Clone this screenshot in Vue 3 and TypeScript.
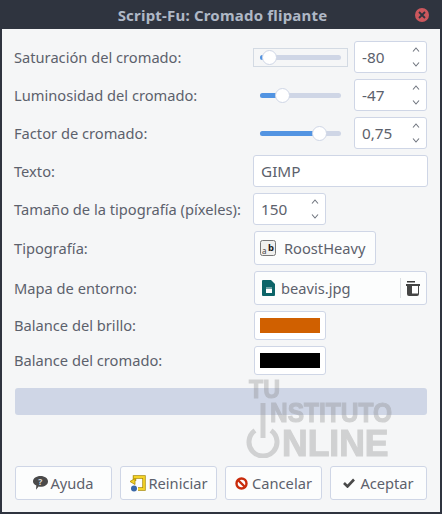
<script setup lang="ts">
interface SliderRow {
  label: string
  value: string
  percent: number
  focused?: boolean
}

const sliders: SliderRow[] = [
  { label: 'Saturación del cromado:', value: '-80', percent: 11, focused: true },
  { label: 'Luminosidad del cromado:', value: '-47', percent: 27 },
  { label: 'Factor de cromado:', value: '0,75', percent: 73 },
]
</script>

<template>
  <div class="window">
    <header class="titlebar">
      <span class="title">Script-Fu: Cromado flipante</span>
      <span class="close">
        <svg width="8" height="8" viewBox="0 0 8 8"><path d="M1 1l6 6M7 1L1 7" stroke="#2f343f" stroke-width="1.8" /></svg>
      </span>
    </header>

    <main class="body">
      <div class="form">
        <div v-for="s in sliders" :key="s.label" class="row">
          <span class="label">{{ s.label }}</span>
          <div class="slider-wrap">
            <div class="slider" :class="{ focused: s.focused }">
              <div class="track">
                <div class="fill" :style="{ width: s.percent + '%' }"></div>
                <div class="thumb" :style="{ left: s.percent + '%' }"></div>
              </div>
            </div>
            <div class="spin">
              <span>{{ s.value }}</span>
              <div class="arrows">
                <svg width="8" height="5" viewBox="0 0 8 5"><path d="M1 4.500L4 1 7 4.500" fill="none" stroke="#6f747e" stroke-width="1.100" /></svg>
                <svg width="8" height="5" viewBox="0 0 8 5"><path d="M1 .5L4 4 7 .5" fill="none" stroke="#6f747e" stroke-width="1.100" /></svg>
              </div>
            </div>
          </div>
        </div>

        <div class="row">
          <span class="label">Texto:</span>
          <div class="field entry">GIMP</div>
        </div>

        <div class="row">
          <span class="label">Tamaño de la tipografía (píxeles):</span>
          <div class="field">
            <div class="spin">
              <span>150</span>
              <div class="arrows">
                <svg width="8" height="5" viewBox="0 0 8 5"><path d="M1 4.500L4 1 7 4.500" fill="none" stroke="#6f747e" stroke-width="1.100" /></svg>
                <svg width="8" height="5" viewBox="0 0 8 5"><path d="M1 .5L4 4 7 .5" fill="none" stroke="#6f747e" stroke-width="1.100" /></svg>
              </div>
            </div>
          </div>
        </div>

        <div class="row tall">
          <span class="label">Tipografía:</span>
          <div class="field">
            <button class="btn font-btn">
              <svg width="16" height="16" viewBox="0 0 16 16">
                <rect x=".5" y=".5" width="15" height="15" rx="2" fill="#f0f0ee" stroke="#777" />
                <text x="2" y="13.500" font-size="8" fill="#444" font-family="Noto Sans">a</text>
                <text x="8" y="10.500" font-size="9.500" font-weight="700" fill="#1c1c1c" font-family="Noto Sans">b</text>
              </svg>
              <span>RoostHeavy</span>
            </button>
          </div>
        </div>

        <div class="row tall">
          <span class="label">Mapa de entorno:</span>
          <div class="field">
            <div class="btn file-btn">
              <svg width="13" height="16" viewBox="0 0 13 16">
                <path d="M0 1a1 1 0 011-1h8l4 4v11a1 1 0 01-1 1H1a1 1 0 01-1-1z" fill="#0c6468" />
                <rect x="4" y="7" width="6" height="6" fill="#fff" />
                <rect x="4" y="7" width="6" height="2" fill="#6fa3a6" />
              </svg>
              <span class="file-name">beavis.jpg</span>
              <span class="sep"></span>
              <svg width="14" height="15" viewBox="0 0 14 15">
                <rect x="1" y="0" width="8" height="1.500" fill="#3b3b3b" />
                <path d="M0 3h14v2h-1v8a2 2 0 01-2 2H3a2 2 0 01-2-2V5H0z" fill="#454545" />
                <rect x="6" y="5" width="6" height="7.500" fill="#fff" />
              </svg>
            </div>
          </div>
        </div>

        <div class="row swatch-row">
          <span class="label">Balance del brillo:</span>
          <div class="field">
            <div class="swatch-btn"><div class="swatch orange"></div></div>
          </div>
        </div>

        <div class="row swatch-row">
          <span class="label">Balance del cromado:</span>
          <div class="field">
            <div class="swatch-btn"><div class="swatch black"></div></div>
          </div>
        </div>
      </div>

      <div class="progress"></div>

      <footer class="actions">
        <button class="btn action">
          <svg class="help-icon" width="15" height="14" viewBox="0 0 15 14">
            <path d="M7.500 0C11.700 0 15 2.300 15 5.400s-3.300 5.300-7.500 5.300c-.7 0-1.300-.1-1.900-.2L3 13.800l.3-4.300C1.300 8.500 0 7.100 0 5.400 0 2.300 3.300 0 7.500 0z" fill="#4a4a4a" />
            <text x="5.200" y="9" font-size="8.500" font-weight="700" fill="#ddd" font-family="Noto Sans">?</text>
          </svg>
          <span>Ayuda</span>
        </button>
        <button class="btn action">
          <svg width="17" height="17" viewBox="0 0 17 17">
            <path d="M9 14h6V2H5.500V6" fill="none" stroke="#a98a00" stroke-width="3.400" />
            <path d="M9 14h6V2H5.500V6" fill="none" stroke="#f5d327" stroke-width="1.800" />
            <path d="M6 3.500L1 6.500 6 9.500z" fill="#f5d327" stroke="#a98a00" stroke-width=".8" />
            <circle cx="5" cy="13.500" r="3" fill="#3a68a8" />
          </svg>
          <span>Reiniciar</span>
        </button>
        <button class="btn action cancel">
          <svg width="13" height="13" viewBox="0 0 13 13">
            <circle cx="6.500" cy="6.500" r="5" fill="#fff" stroke="#c92c0c" stroke-width="2.400" />
            <path d="M3 3l7 7" stroke="#c92c0c" stroke-width="2.400" />
          </svg>
          <span>Cancelar</span>
        </button>
        <button class="btn action accept">
          <svg width="12" height="10" viewBox="0 0 12 10">
            <path d="M1 5l3.500 3.500L11 1.500" fill="none" stroke="#4a4a4a" stroke-width="2.600" />
          </svg>
          <span>Aceptar</span>
        </button>
      </footer>

      <div class="watermark">
        <span class="wm-tu">TU</span>
        <span class="wm-inst">NSTITUTO</span>
        <span class="wm-online">NLINE</span>
        <svg class="wm-power" width="34" height="55" viewBox="0 0 34 55">
          <path d="M17 0v35" stroke="#858585" stroke-width="5" />
          <path d="M9 27.500a14 14 0 1016 0" fill="none" stroke="#858585" stroke-width="5" />
        </svg>
      </div>
    </main>
  </div>
</template>

<style scoped>
.window {
  width: 442px;
  height: 514px;
  background: #2f343f;
  display: flex;
  flex-direction: column;
  font-family: "Noto Sans", sans-serif;
  color: #5c616c;
  font-size: 14.67px;
  overflow: hidden;
}

.titlebar {
  height: 29px;
  flex: none;
  display: flex;
  align-items: center;
  justify-content: center;
  padding-left: 3px;
  position: relative;
}

.title {
  font-size: 15px;
  font-weight: 700;
  color: #afb8c6;
  letter-spacing: .2px;
}

.close {
  position: absolute;
  right: 13px;
  top: 8px;
  width: 14px;
  height: 14px;
  border-radius: 50%;
  background: #cc575d;
  display: flex;
  align-items: center;
  justify-content: center;
}

.body {
  flex: 1;
  margin: 0 2px 2px;
  background: #f5f6f7;
  padding: 12px 13px 12px;
  display: flex;
  flex-direction: column;
  position: relative;
}

.form {
  display: flex;
  flex-direction: column;
  gap: 6px;
  margin-left: -1px;
}

.row {
  display: flex;
  align-items: center;
  height: 32px;
  justify-content: space-between;
}

.row.tall {
  height: 34px;
}

.row.swatch-row {
  height: 29px;
}

.swatch-row .label {
  margin-bottom: 2px;
}

.label {
  white-space: nowrap;
}

.field {
  width: 174px;
  flex: none;
}

.entry {
  height: 32px;
  box-sizing: border-box;
  background: #fff;
  border: 1px solid #cfd6e6;
  border-radius: 3px;
  padding-left: 7px;
  display: flex;
  align-items: center;
  margin-right: -1px;
  width: 175px;
  font-size: 15.3px;
}

.slider-wrap {
  width: 174px;
  flex: none;
  display: flex;
  align-items: center;
  gap: 6px;
}

.slider {
  width: 95px;
  height: 19px;
  box-sizing: border-box;
  padding: 0 6px;
  display: flex;
  align-items: center;
  border: 1px solid transparent;
  flex: none;
}

.slider.focused {
  border-color: #d3dae3;
}

.track {
  position: relative;
  width: 81px;
  height: 5px;
  border-radius: 3px;
  background: #cfd6e6;
}

.fill {
  height: 100%;
  background: #5294e2;
  border-radius: 3px;
}

.thumb {
  position: absolute;
  top: -5px;
  width: 15px;
  height: 15px;
  margin-left: -7px;
  box-sizing: border-box;
  border-radius: 50%;
  background: #fff;
  border: 1px solid #cfd6e6;
}

.spin {
  width: 73px;
  height: 32px;
  box-sizing: border-box;
  background: #fff;
  border: 1px solid #cfd6e6;
  border-radius: 3px;
  display: flex;
  align-items: center;
  justify-content: space-between;
  padding: 0 6px 0 7px;
  font-size: 15.3px;
}

.arrows {
  height: 100%;
  display: flex;
  flex-direction: column;
  justify-content: space-between;
  padding: 5px 0;
  box-sizing: border-box;
}

.arrows svg {
  display: block;
}

.btn {
  font: inherit;
  color: inherit;
  background: #fcfdfd;
  border: 1px solid #cfd6e6;
  border-radius: 3px;
  display: flex;
  align-items: center;
  box-sizing: border-box;
}

.font-btn {
  width: 122px;
  height: 34px;
  margin-left: 1px;
  padding: 0 0 0 5px;
  gap: 8px;
}

.file-btn {
  width: 173px;
  height: 34px;
  margin-left: 1px;
  padding: 0 6px 0 7px;
}

.file-name {
  margin-left: 6px;
  flex: 1;
}

.sep {
  width: 1px;
  height: 20px;
  background: #dcdfe3;
  margin-right: 5px;
}

.swatch-btn {
  width: 72px;
  height: 29px;
  margin-left: 1px;
  box-sizing: border-box;
  background: #fff;
  border: 1px solid #cfd6e6;
  border-radius: 3px;
  padding: 6px 5px;
}

.swatch {
  height: 100%;
}

.orange {
  background: #d06000;
}

.black {
  background: #000;
}

.progress {
  height: 27px;
  margin-top: 13px;
  background: #cfd6e6;
  border-radius: 3px;
}

.actions {
  margin-top: auto;
  display: grid;
  grid-template-columns: repeat(4, 97px);
  justify-content: space-between;
}

.action {
  height: 34px;
  justify-content: center;
  gap: 2px;
  padding: 0;
}

.action.cancel {
  gap: 4px;
}

.action.accept {
  gap: 5px;
}

.watermark {
  position: absolute;
  left: 224px;
  top: 345px;
  width: 170px;
  height: 90px;
  font-weight: 700;
  color: #858585;
  opacity: .32;
  filter: blur(.7px);
  pointer-events: none;
}

.wm-tu,
.wm-inst,
.wm-online {
  position: absolute;
  line-height: 1;
  font-family: "Liberation Sans", sans-serif;
  transform-origin: left top;
  -webkit-text-stroke: 1.2px #858585;
}

.wm-tu {
  left: 23px;
  top: 3px;
  font-size: 25px;
  transform: scaleX(.93);
}

.wm-inst {
  left: 44px;
  top: 25px;
  font-size: 28px;
  transform: scaleX(.875);
}

.wm-online {
  left: 56px;
  top: 51px;
  font-size: 37px;
  transform: scaleX(.96);
}

.wm-power {
  position: absolute;
  left: 20px;
  top: 29px;
}
</style>

<style>
html,
body {
  margin: 0;
  background: #2f343f;
}
</style>
